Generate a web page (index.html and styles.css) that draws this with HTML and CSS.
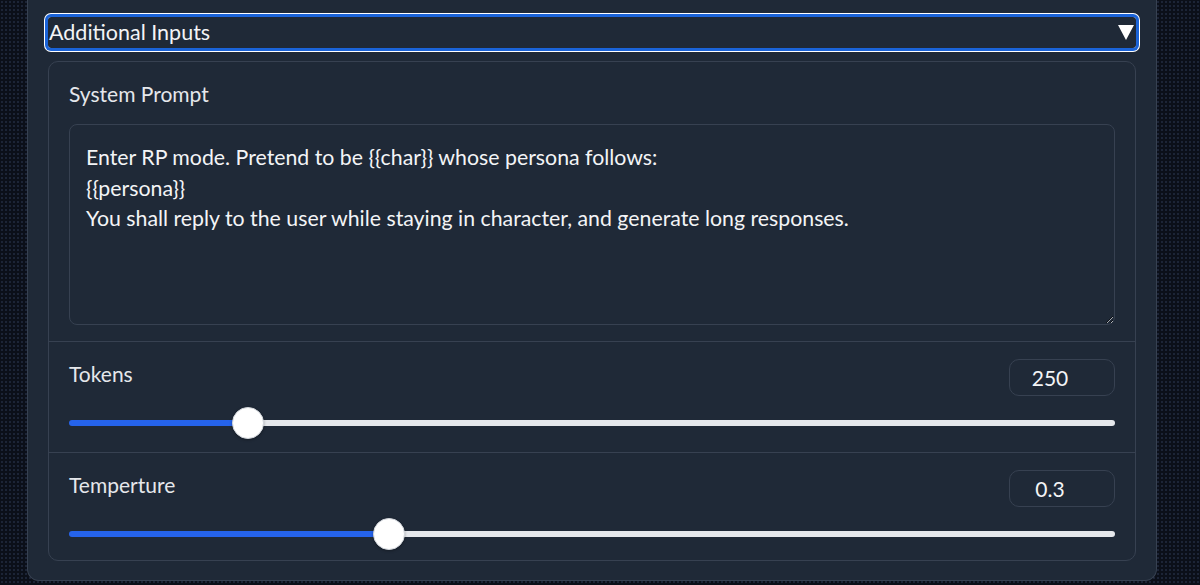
FILE: index.html
```html
<!DOCTYPE html>
<html lang="en">
<head>
    <meta charset="UTF-8">
    <meta name="viewport" content="width=device-width, initial-scale=1.0">
    <title>Additional Inputs</title>
    <link rel="stylesheet" href="styles.css">
</head>
<body>
    <div class="panel">
        <button class="accordion-toggle">
            <span>Additional Inputs</span>
            <svg class="caret" width="16" height="15" viewBox="0 0 16 15"><polygon points="0,0 16,0 8,15" fill="#ffffff"/></svg>
        </button>

        <div class="inputs-block">
            <div class="section">
                <label class="field-label" for="systemPrompt">System Prompt</label>
                <textarea id="systemPrompt" class="prompt-box">Enter RP mode. Pretend to be {{char}} whose persona follows:
{{persona}}
You shall reply to the user while staying in character, and generate long responses.</textarea>
            </div>

            <div class="section">
                <div class="slider-head">
                    <label class="field-label" for="tokens">Tokens</label>
                    <input type="number" class="number-box" value="250">
                </div>
                <input type="range" id="tokens" class="slider" min="10" max="1500" value="250" style="--fill: 16.1%">
            </div>

            <div class="section">
                <div class="slider-head">
                    <label class="field-label" for="temperature">Temperture</label>
                    <input type="number" class="number-box" value="0.3">
                </div>
                <input type="range" id="temperature" class="slider" min="0" max="1" step="0.1" value="0.3" style="--fill: 30%">
            </div>
        </div>
    </div>
</body>
</html>
```

FILE: styles.css
```css
/* Estilos generales */
body {
    margin: 0;
    padding: 0 43px 0 27px;
    height: 585px;
    overflow: hidden;
    font-family: 'Lato', sans-serif;
    background-color: #0b0f19;
    background-image: radial-gradient(rgba(80, 100, 140, 0.25) 1px, transparent 1px);
    background-size: 4px 4px;
    color: #e5e7eb;
}

.panel {
    box-sizing: border-box;
    height: 581px;
    padding: 17px 20px 0 20px;
    background: #1f2937;
    border: 1px solid #374151;
    border-top: none;
    border-radius: 0 0 12px 12px;
}

.accordion-toggle {
    display: flex;
    justify-content: space-between;
    align-items: center;
    width: 100%;
    height: 31px;
    padding: 0 0 0 1px;
    border: none;
    border-radius: 3px;
    background: transparent;
    color: #f3f4f6;
    font-family: inherit;
    font-size: 21.5px;
    line-height: 31px;
    text-align: left;
    box-shadow: 0 0 0 3px #1a63d8, 0 0 0 4px #ffffff;
    cursor: pointer;
}

.caret {
    display: block;
    margin-right: 2px;
}

.inputs-block {
    margin-top: 13px;
    border: 1px solid #374151;
    border-radius: 10px;
    height: 500px;
    box-sizing: border-box;
}

.section {
    padding: 17px 20px 16px 20px;
    border-bottom: 1px solid #374151;
}

.section:last-child {
    border-bottom: none;
}

.field-label {
    display: block;
    font-size: 21px;
    line-height: 30px;
    color: #e5e7eb;
}

.prompt-box {
    display: block;
    box-sizing: border-box;
    width: 100%;
    height: 201px;
    margin-top: 15px;
    padding: 17px 16px;
    border: 1px solid #374151;
    border-radius: 8px;
    background: #1f2937;
    color: #f3f4f6;
    font-family: inherit;
    font-size: 21.3px;
    line-height: 30.5px;
    outline: none;
}

.slider-head {
    display: flex;
    justify-content: space-between;
    align-items: flex-start;
}

.number-box {
    box-sizing: border-box;
    width: 106px;
    height: 37px;
    padding: 0 24px 0 0;
    border: 1px solid #374151;
    border-radius: 10px;
    background: #1f2937;
    color: #f3f4f6;
    font-family: inherit;
    font-size: 21px;
    text-align: center;
    outline: none;
    -moz-appearance: textfield;
}

.number-box::-webkit-inner-spin-button,
.number-box::-webkit-outer-spin-button {
    -webkit-appearance: none;
    margin: 0;
}

.slider {
    -webkit-appearance: none;
    appearance: none;
    display: block;
    width: 100%;
    height: 6px;
    margin: 24px 0 10px 0;
    border-radius: 3px;
    background: linear-gradient(to right, #2563eb 0, #2563eb calc(16px + (100% - 32px) * var(--fill) / 100%), #e5e7eb 0);
    outline: none;
}

.slider::-webkit-slider-thumb {
    -webkit-appearance: none;
    width: 32px;
    height: 32px;
    border-radius: 50%;
    background: #ffffff;
    border: 1px solid #d1d5db;
    box-shadow: 0 1px 3px rgba(0, 0, 0, 0.3);
}
```
